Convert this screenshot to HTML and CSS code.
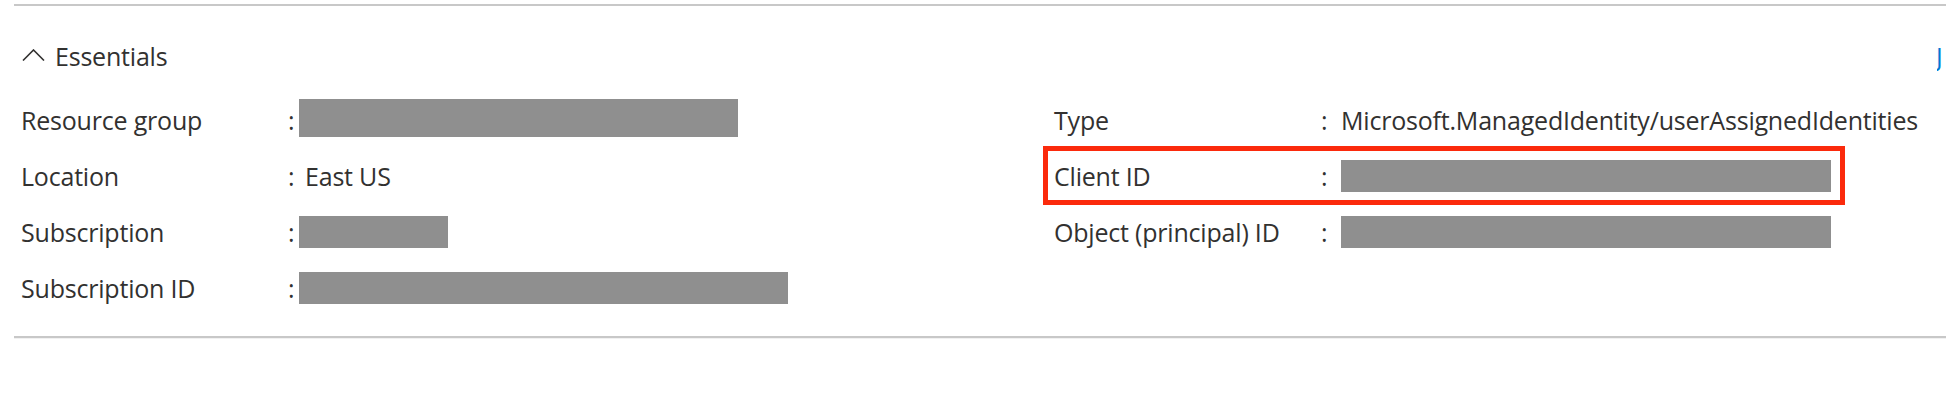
FILE: index.html
```html
<!DOCTYPE html>
<html lang="en">
<head>
<meta charset="utf-8">
<title>Essentials</title>
<link rel="stylesheet" href="styles.css">
</head>
<body>
<section class="essentials">
  <div class="rule rule-top"></div>
  <div class="header">
    <button class="toggle" type="button">
      <svg class="chevron" width="23" height="12" viewBox="0 0 23 12" aria-hidden="true">
        <polyline points="1,11.5 11.5,1 22,11.5" fill="none" stroke="#323130" stroke-width="1.6"/>
      </svg>
      <span class="toggle-text">Essentials</span>
    </button>
    <div class="link-clip"><a class="json-link" href="#">JSON View</a></div>
  </div>
  <div class="grid">
    <div class="col col-left">
      <div class="row"><span class="label">Resource group</span><span class="sep">:</span><span class="redact redact-rg"></span></div>
      <div class="row"><span class="label">Location</span><span class="sep">:</span><span class="val">East US</span></div>
      <div class="row"><span class="label">Subscription</span><span class="sep">:</span><span class="redact redact-sub"></span></div>
      <div class="row"><span class="label">Subscription ID</span><span class="sep">:</span><span class="redact redact-subid"></span></div>
    </div>
    <div class="col col-right">
      <div class="row"><span class="label">Type</span><span class="sep">:</span><span class="val">Microsoft.ManagedIdentity/userAssignedIdentities</span></div>
      <div class="row row-highlight"><span class="label">Client ID</span><span class="sep">:</span><span class="redact redact-id"></span></div>
      <div class="row"><span class="label">Object (principal) ID</span><span class="sep">:</span><span class="redact redact-id"></span></div>
    </div>
  </div>
  <div class="rule rule-bottom"></div>
</section>
</body>
</html>
```
FILE: styles.css
```css
html, body {
  margin: 0;
  padding: 0;
  background: #ffffff;
}
body {
  font-family: "Open Sans", "Noto Sans", "Liberation Sans", sans-serif;
  font-size: 25px;
  letter-spacing: -0.2px;
  color: #323130;
  overflow: hidden;
  width: 1946px;
  height: 400px;
}
.essentials {
  margin-left: 14px;
  padding-top: 4px;
}
.rule {
  height: 2px;
  background: #c8c8c8;
}
.rule-bottom {
  margin-top: 20px;
  box-shadow: 0 1px 0 #f1f1f1;
}
.header {
  height: 86px;
  display: flex;
  align-items: flex-start;
  padding-left: 8px;
  box-sizing: border-box;
  padding-top: 32px;
}
.toggle {
  display: flex;
  align-items: center;
  gap: 10px;
  background: none;
  border: 0;
  padding: 0;
  font: inherit;
  letter-spacing: inherit;
  color: inherit;
  line-height: 36px;
  height: 36px;
}
.chevron {
  display: block;
  margin-top: -2px;
}
.link-clip {
  margin-left: auto;
  margin-right: 3px;
  width: 6px;
  overflow: hidden;
  line-height: 36px;
}
.json-link {
  display: block;
  margin-left: -1px;
  color: #0078d4;
  text-decoration: none;
  white-space: nowrap;
}
.grid {
  display: grid;
  grid-template-columns: 1033px 1fr;
  padding-left: 7px;
}
.col {
  display: flex;
  flex-direction: column;
  align-items: flex-start;
}
.row {
  display: flex;
  align-items: center;
  height: 56px;
  white-space: nowrap;
  position: relative;
}
.label {
  width: 267px;
  flex: none;
}
.sep {
  width: 11px;
  flex: none;
}
.val {
  margin-left: 6px;
}
.col-right .val,
.col-right .redact {
  margin-left: 9px;
}
.redact {
  display: block;
  background: #8f8f8f;
  height: 32px;
}
.redact-rg {
  width: 439px;
  height: 38px;
  margin-top: -4px;
}
.redact-sub {
  width: 149px;
}
.redact-subid {
  width: 489px;
}
.redact-id {
  width: 490px;
}
.row-highlight::after {
  content: "";
  position: absolute;
  top: -2px;
  bottom: -1px;
  left: -11px;
  right: -14px;
  border: 5px solid #fb2a0c;
  pointer-events: none;
}
```
